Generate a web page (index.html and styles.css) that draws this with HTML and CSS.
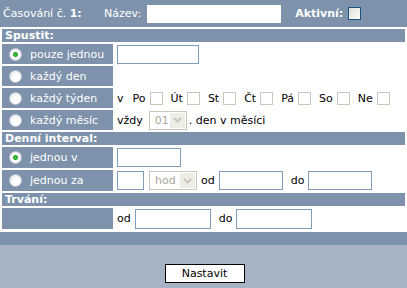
FILE: index.html
```html
<!DOCTYPE html>
<html lang="cs">
<head>
    <meta charset="UTF-8">
    <title>Časování</title>
    <link rel="stylesheet" href="styles.css">
</head>
<body>
    <!-- Title bar -->
    <div class="top">
        <span class="title">Časování č. <b>1:</b></span>
        <span>Název:</span>
        <span class="field name"></span>
        <b class="active">Aktivní:</b>
        <span class="check check-on"></span>
    </div>

    <!-- Schedule form -->
    <div class="form">
        <div class="head">Spustit:</div>

        <div class="opt"><span class="radio on"></span>pouze jednou</div>
        <div class="val"><span class="field w82"></span></div>

        <div class="opt"><span class="radio"></span>každý den</div>
        <div class="val"></div>

        <div class="opt"><span class="radio"></span>každý týden</div>
        <div class="val days">
            <span class="v">v</span>
            <span class="day">Po<span class="check"></span></span>
            <span class="day">Út<span class="check"></span></span>
            <span class="day">St<span class="check"></span></span>
            <span class="day">Čt<span class="check"></span></span>
            <span class="day">Pá<span class="check"></span></span>
            <span class="day">So<span class="check"></span></span>
            <span class="day">Ne<span class="check"></span></span>
        </div>

        <div class="opt"><span class="radio"></span>každý měsíc</div>
        <div class="val">
            vždy
            <span class="select s38"><span class="sel-text">01</span><span class="arrow"><svg width="9" height="6" viewBox="0 0 9 6"><path d="M1 1l3.5 3.5L8 1" fill="none" stroke="#c8c6bb" stroke-width="2"/></svg></span></span>
            <span class="after">. den v měsíci</span>
        </div>

        <div class="head">Denní interval:</div>

        <div class="opt"><span class="radio on"></span>jednou v</div>
        <div class="val"><span class="field w64"></span></div>

        <div class="opt"><span class="radio"></span>jednou za</div>
        <div class="val">
            <span class="field w27"></span>
            <span class="select s48"><span class="sel-text">hod</span><span class="arrow"><svg width="9" height="6" viewBox="0 0 9 6"><path d="M1 1l3.5 3.5L8 1" fill="none" stroke="#c8c6bb" stroke-width="2"/></svg></span></span>
            <span class="lab">od</span><span class="field w64"></span>
            <span class="lab gap">do</span><span class="field w64"></span>
        </div>

        <div class="head">Trvání:</div>

        <div class="opt"></div>
        <div class="val">
            <span class="lab first">od</span><span class="field w76 tall"></span>
            <span class="lab gap">do</span><span class="field w76 tall"></span>
        </div>
    </div>

    <div class="bar"></div>

    <div class="foot">
        <button class="btn">Nastavit</button>
    </div>
</body>
</html>
```

FILE: styles.css
```css
body {
    margin: 0;
    background: #fff;
    font-family: "DejaVu Sans", Verdana, sans-serif;
    font-size: 11px;
    color: #000;
    overflow: hidden;
}

/* Title bar */
.top {
    height: 27px;
    background: #7e92ab;
    color: #fff;
    display: flex;
    align-items: center;
    padding-left: 3px;
}

.title {
    width: 101px;
}

.top .name {
    width: 134px;
    height: 18px;
    margin-left: 6px;
    border-color: #fff;
}

.active {
    margin-left: 14px;
}

.top .check {
    margin-left: 5px;
}

/* Form grid */
.form {
    display: grid;
    grid-template-columns: 111px 1fr;
    grid-template-rows: 13px 20px 20px 20px 20px 13px 21px 21px 13px 21px;
    gap: 2px;
    padding: 2px 2px 0;
}

.head {
    grid-column: 1 / -1;
    background: #7e92ab;
    color: #fff;
    font-weight: bold;
    line-height: 13px;
    padding-left: 3px;
}

.opt {
    background: #7e92ab;
    color: #fff;
    display: flex;
    align-items: center;
    gap: 8px;
    padding-left: 7px;
}

.val {
    display: flex;
    align-items: center;
    padding-left: 2px;
    white-space: nowrap;
}

/* Fake controls */
.radio {
    width: 13px;
    height: 13px;
    box-sizing: border-box;
    border-radius: 50%;
    border: 1px solid #c3cad4;
    background: radial-gradient(circle at 65% 65%, #fff 0, #fff 35%, #dfe3e8 100%);
    flex: none;
}

.radio.on {
    background: radial-gradient(circle, #4fcb4f 0, #21a321 2px, #fff 3px, #fff 45%, #dfe3e8 100%);
}

.field {
    display: inline-block;
    box-sizing: border-box;
    height: 19px;
    border: 1px solid #7f9db9;
    background: #fff;
}

.field.tall {
    height: 20px;
}

.w82 { width: 82px; }
.w64 { width: 64px; }
.w27 { width: 27px; }
.w76 { width: 76px; }

.check {
    display: inline-block;
    width: 13px;
    height: 13px;
    box-sizing: border-box;
    border: 1px solid #cac8bb;
    background: #fff;
}

.check-on {
    border-color: #1c5180;
    background: linear-gradient(135deg, #dcdcd7, #fff);
}

.days .v {
    margin-right: 9px;
}

.day {
    display: inline-flex;
    align-items: center;
    margin-right: 8px;
}

.day .check {
    margin-left: 4px;
}

.select {
    display: inline-flex;
    align-items: center;
    box-sizing: border-box;
    height: 19px;
    border: 1px solid #c9c7ba;
    background: #fff;
    color: #aca899;
    padding: 1px;
    margin-left: 6px;
}

.s38 { width: 38px; }
.s48 { width: 48px; margin-left: 5px; }

.sel-text {
    flex: 1;
    padding-left: 4px;
}

.arrow {
    width: 15px;
    height: 15px;
    background: #eeede5;
    display: flex;
    align-items: center;
    justify-content: center;
}

.after {
    margin-left: 2px;
}

.lab {
    margin: 0 4px;
}

.lab.first {
    margin-left: 0;
}

.lab.gap {
    margin-left: 8px;
}

/* Bottom */
.bar {
    height: 13px;
    margin-top: 3px;
    background: #7e92ab;
}

.foot {
    height: 43px;
    background: #a5b3c4;
    display: flex;
    justify-content: center;
    padding-top: 19px;
    box-sizing: border-box;
}

.btn {
    width: 80px;
    height: 19px;
    border: 1px solid #000;
    background: #fff;
    font-family: "DejaVu Sans", Verdana, sans-serif;
    font-size: 11px;
    color: #000;
    padding: 0;
    margin-left: 2px;
}
```
